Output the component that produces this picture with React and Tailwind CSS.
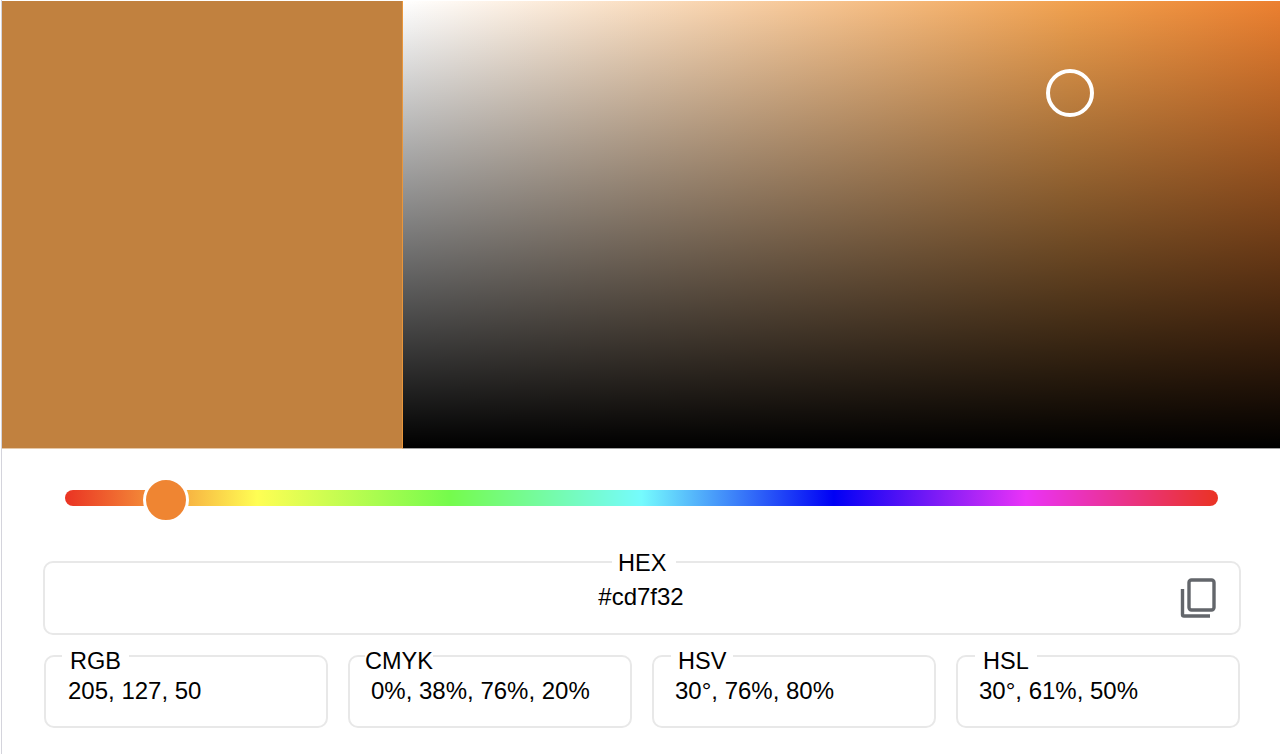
const fields = [
  { label: "RGB", value: "205, 127, 50", labelClass: "left-[16px] px-[8px]", valueClass: "pl-[22px]" },
  { label: "CMYK", value: "0%, 38%, 76%, 20%", labelClass: "left-[15px] px-0", valueClass: "pl-[21px]" },
  { label: "HSV", value: "30°, 76%, 80%", labelClass: "left-[17px] px-[7px]", valueClass: "pl-[21px]" },
  { label: "HSL", value: "30°, 61%, 50%", labelClass: "left-[17px] px-[8px]", valueClass: "pl-[21px]" },
];

function CopyIcon() {
  return (
    <svg width="36" height="40" viewBox="0 0 36 40" fill="none" stroke="#63666b" strokeWidth="3.4">
      <rect x="9" y="2" width="25" height="30" rx="2.5" />
      <path d="M2.5 11V36.5Q2.5 38 4 38H30" />
    </svg>
  );
}

export default function App() {
  return (
    <div className="h-[754px] w-[1280px] overflow-hidden bg-white pl-px font-['Liberation_Sans',Arial,sans-serif] text-[24px] leading-[28px] text-black">
      <div className="h-full border-l border-[#d4d4dc] pt-px">
        <div className="flex h-[448px]">
          <div className="w-[401px] border-r border-b border-r-[#e8963c] border-b-[#e6c8a8] bg-[#c1813f]" />
          <div className="relative flex-1 border-b border-[#a0a0a0] bg-[linear-gradient(to_bottom,transparent,#000),linear-gradient(to_right,#fff_0%,#f1a14f_76%,#ec8030_100%)]">
            <div className="absolute left-[643px] top-[68px] size-[48px] rounded-full border-4 border-white" />
          </div>
        </div>

        <div className="flex flex-col pl-[41px] pt-[41px]">
          <div className="relative ml-[22px] h-[16px] w-[1153px] rounded-full bg-[linear-gradient(to_right,#ea3323_0%,#fffe54_16.67%,#75fb4c_33.33%,#75fbfd_50%,#0000f5_66.67%,#ea33f7_83.33%,#ea3323_100%)]">
            <div className="absolute left-[78px] top-[-13px] size-[46px] rounded-full border-[3px] border-white bg-[#ef8532]" />
          </div>

          <div className="relative mt-[55px] grid h-[74px] w-[1198px] grid-cols-[1fr_auto_1fr] items-center rounded-[10px] border-2 border-[#e8e8e8] px-[23px]">
            <span className="absolute left-[567px] top-[-14px] bg-white pl-[6px] pr-[10px] text-[23.5px]">HEX</span>
            <span className="col-start-2 -translate-x-[1px] -translate-y-[1px]">#cd7f32</span>
            <span className="col-start-3 flex justify-self-end"><CopyIcon /></span>
          </div>

          <div className="ml-px mt-[20px] grid w-[1196px] grid-cols-4 gap-x-[20px]">
            {fields.map((f) => (
              <div key={f.label} className="relative h-[73px] rounded-[10px] border-2 border-[#e8e8e8]">
                <span className={`absolute top-[-9px] bg-white text-[23.5px] leading-[26px] ${f.labelClass}`}>{f.label}</span>
                <div className={`pt-[20px] ${f.valueClass}`}>{f.value}</div>
              </div>
            ))}
          </div>
        </div>
      </div>
    </div>
  );
}
